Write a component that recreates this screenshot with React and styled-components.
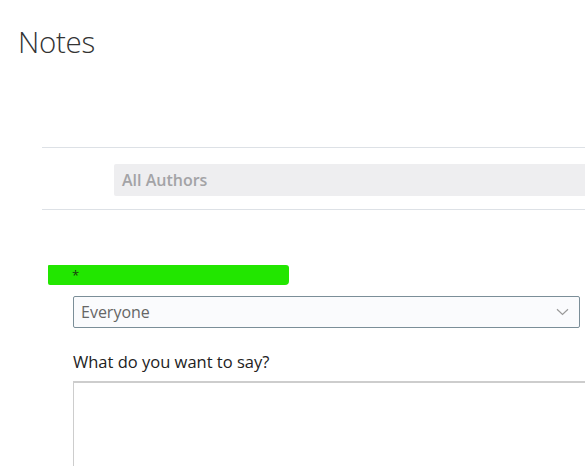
import React from 'react';
import styled, { createGlobalStyle } from 'styled-components';

const GlobalStyle = createGlobalStyle`
  html, body {
    margin: 0;
    padding: 0;
    background: #ffffff;
    overflow: hidden;
  }
  body {
    font-family: "Open Sans", "Noto Sans", sans-serif;
    color: #222;
  }
`;

const Page = styled.div`
  width: 585px;
  height: 466px;
  overflow: hidden;
`;

const Title = styled.h1`
  margin: 0;
  padding: 22px 0 0 18px;
  font-size: 29.5px;
  line-height: 40px;
  font-weight: 300;
  color: #333;
  letter-spacing: -0.3px;
`;

const FilterBar = styled.div`
  margin: 85px 0 0 42px;
  padding: 16px 0 13px 72px;
  border-top: 1px solid #dde1e6;
  border-bottom: 1px solid #dde1e6;
`;

const FilterBox = styled.div`
  height: 32px;
  display: flex;
  align-items: center;
  padding-left: 8px;
  background: #eeeef0;
  border-radius: 2px 0 0 2px;
  font-size: 16px;
  font-weight: 600;
  color: #a3a3a6;
`;

const Form = styled.div`
  padding: 55px 0 0 73px;
`;

const Redacted = styled.div`
  margin-left: -25px;
  width: 241px;
  height: 20px;
  background: #22e600;
  border-radius: 1px 3px 4px 2px;
  display: flex;
  align-items: center;
  padding-left: 24px;
  box-sizing: border-box;
  font-size: 13px;
  color: #1a3a10;
`;

const Select = styled.div`
  margin-top: 11px;
  width: 507px;
  height: 32px;
  box-sizing: border-box;
  border: 1px solid #7b8e98;
  border-radius: 2px;
  background: #fafbfd;
  display: flex;
  align-items: center;
  justify-content: space-between;
  padding: 0 10px 0 7px;
  font-size: 16px;
  color: #666;
`;

const Label = styled.div`
  margin-top: 23px;
  font-size: 16.5px;
  line-height: 22px;
  color: #222;
`;

const TextArea = styled.div`
  margin-top: 8px;
  height: 120px;
  border-top: 2px solid #cdcdcd;
  border-left: 1px solid #cdcdcd;
`;

const Chevron = () => (
  <svg width="13" height="8" viewBox="0 0 13 8" fill="none">
    <path d="M1 1.2 L6.5 6.4 L12 1.2" stroke="#9a9a9a" strokeWidth="1.2" />
  </svg>
);

export default function App() {
  return (
    <Page>
      <GlobalStyle />
      <Title>Notes</Title>
      <FilterBar>
        <FilterBox>All Authors</FilterBox>
      </FilterBar>
      <Form>
        <Redacted>*</Redacted>
        <Select>
          <span>Everyone</span>
          <Chevron />
        </Select>
        <Label>What do you want to say?</Label>
        <TextArea />
      </Form>
    </Page>
  );
}
